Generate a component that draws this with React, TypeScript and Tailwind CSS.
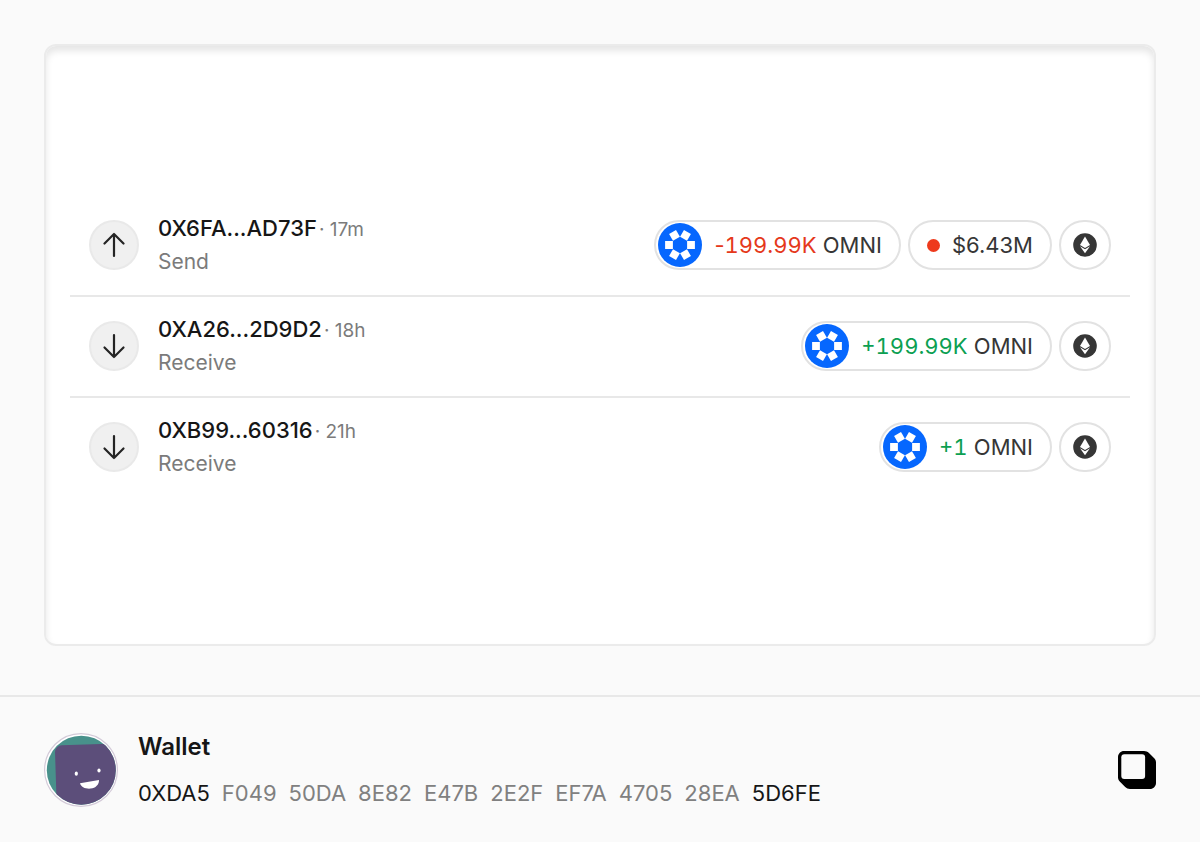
import React from "react";

type Transaction = {
  hash: string;
  age: string;
  kind: "Send" | "Receive";
  sign: "+" | "-";
  amount: string;
  value?: string;
};

const transactions: Transaction[] = [
  { hash: "0X6FA...AD73F", age: "17m", kind: "Send", sign: "-", amount: "199.99K", value: "$6.43M" },
  { hash: "0XA26...2D9D2", age: "18h", kind: "Receive", sign: "+", amount: "199.99K" },
  { hash: "0XB99...60316", age: "21h", kind: "Receive", sign: "+", amount: "1" },
];

const addressParts = [
  "0XDA5",
  "F049",
  "50DA",
  "8E82",
  "E47B",
  "2E2F",
  "EF7A",
  "4705",
  "28EA",
  "5D6FE",
];

const ArrowIcon: React.FC<{ up: boolean }> = ({ up }) => (
  <svg
    className={up ? "size-7" : "size-7 rotate-180"}
    viewBox="0 0 28 28"
    fill="none"
    stroke="#242424"
    strokeWidth="2.2"
    strokeLinecap="round"
    strokeLinejoin="round"
    aria-hidden="true"
  >
    <path d="M14 25V3M4.5 12.5L14 3L23.5 12.5" />
  </svg>
);

const OmniLogo: React.FC = () => (
  <svg className="size-11 shrink-0" viewBox="0 0 44 44" aria-hidden="true">
    <circle cx="22" cy="22" r="22" fill="#0667fe" />
    {[0, 60, 120, 180, 240, 300].map((angle) => (
      <path
        key={angle}
        d="M29.1 18H36.9V26H29.1Z"
        fill="#fff"
        transform={`rotate(${angle} 22 22)`}
      />
    ))}
  </svg>
);

const EthereumLogo: React.FC = () => (
  <svg className="size-6" viewBox="0 0 24 24" aria-hidden="true">
    <circle cx="12" cy="12" r="11.8" fill="#363636" />
    <path d="M12 3.6L17 12.1L12 15L7 12.1Z" fill="#fff" />
    <path d="M7 13.3L12 16.2L17 13.3L12 20.3Z" fill="#fff" />
  </svg>
);

const Avatar: React.FC = () => (
  <svg className="size-[74px] shrink-0" viewBox="0 0 74 74" aria-hidden="true">
    <defs>
      <clipPath id="face">
        <circle cx="37.3" cy="37.2" r="34.5" />
      </clipPath>
    </defs>
    <circle cx="37" cy="37" r="36.4" fill="#fff" stroke="#d3cad8" strokeWidth="1.2" />
    <g clipPath="url(#face)">
      <rect width="74" height="74" fill="#48918b" />
      <rect
        x="10.8"
        y="12.4"
        width="74"
        height="74"
        rx="7"
        fill="#5c4e7a"
        transform="rotate(-1.8 11 12)"
      />
    </g>
    <ellipse cx="32.3" cy="40.7" rx="1.6" ry="2.1" fill="#fff" />
    <ellipse cx="55" cy="37.5" rx="1.6" ry="2.1" fill="#fff" />
    <path d="M36 50.2L55 47C55.2 51.6 51.5 55.2 46.6 55.6C41.2 56 37 54 36 50.2Z" fill="#fff" />
  </svg>
);

const TransactionRow: React.FC<{ tx: Transaction }> = ({ tx }) => {
  const sent = tx.kind === "Send";

  return (
    <li className="flex flex-wrap items-center justify-between gap-x-6 px-[19px] pt-4 pb-[17px]">
      <div className="flex items-center gap-[19px]">
        <span className="flex size-[50px] items-center justify-center rounded-full border-2 border-[#e9e9e9] bg-[#f0f0f0]">
          <ArrowIcon up={sent} />
        </span>
        <div>
          <p className="flex items-baseline gap-0.5 leading-8">
            <span className="text-[22px] font-medium text-[#161616]">{tx.hash}</span>
            <span className="text-[19px] text-[#7b7b7b]">· {tx.age}</span>
          </p>
          <p className="text-[21px] leading-8 text-[#7b7b7b]">{tx.kind}</p>
        </div>
      </div>

      <div className="flex items-center gap-[7px] text-[22px] text-[#363636]">
        <span className="flex h-[50px] items-center gap-3 rounded-full border-2 border-[#e2e2e2] bg-white pl-0.5 pr-[17px]">
          <OmniLogo />
          <span>
            <span className={sent ? "text-[#e5381b]" : "tabular-nums text-[#0c9f52]"}>
              {tx.sign}
              <span className="tabular-nums">{tx.amount}</span>
            </span>{" "}
            OMNI
          </span>
        </span>
        {tx.value && (
          <span className="flex h-[50px] items-center gap-3 rounded-full border-2 border-[#e2e2e2] bg-white px-[17px]">
            <span className="size-[13px] rounded-full bg-[#ee3a1c]" />
            {tx.value}
          </span>
        )}
        <span className="flex h-[50px] w-[52px] items-center justify-center rounded-full border-2 border-[#e2e2e2] bg-white">
          <EthereumLogo />
        </span>
      </div>
    </li>
  );
};

const App: React.FC = () => {
  return (
    <div className="flex min-h-screen flex-col bg-[#fafafa] font-['Inter',sans-serif]">
      <main className="px-11 pt-11 pb-[49px]">
        <section className="rounded-xl border-2 border-[#ebebeb] bg-white px-6 pt-[150px] pb-[147px] shadow-[inset_0_5px_7px_#e6e6e6]">
          <ul className="divide-y-2 divide-[#e8e8e8]">
            {transactions.map((tx) => (
              <TransactionRow key={tx.hash} tx={tx} />
            ))}
          </ul>
        </section>
      </main>

      <footer className="flex grow items-center justify-between border-t-2 border-[#e8e8e8] px-11">
        <div className="flex items-center gap-5">
          <Avatar />
          <div>
            <h1 className="mb-3.5 text-[24px] font-semibold leading-8 text-[#161616]">Wallet</h1>
            <p className="flex flex-wrap gap-x-3 text-[22px] leading-8 text-[#808080]">
              {addressParts.map((part, i) => (
                <span
                  key={part}
                  className={i === 0 || i === addressParts.length - 1 ? "text-[#161616]" : ""}
                >
                  {part}
                </span>
              ))}
            </p>
          </div>
        </div>
        <button type="button" aria-label="Copy address">
          <svg className="size-[38px]" viewBox="0 0 38 38" aria-hidden="true">
            <path
              d="M6 0H26C28 0 29.5 .7 30.7 1.8L36 7C37.3 8.3 38 9.8 38 11.6V32C38 35.3 35.3 38 32 38H12C10 38 8.5 37.3 7.2 36L2 30.8C.7 29.5 0 28 0 26.2V6C0 2.7 2.7 0 6 0Z"
              fill="#000"
            />
            <rect x="3.3" y="3.2" width="23.8" height="24.8" rx="3" fill="#fafafa" />
          </svg>
        </button>
      </footer>
    </div>
  );
};

export default App;
